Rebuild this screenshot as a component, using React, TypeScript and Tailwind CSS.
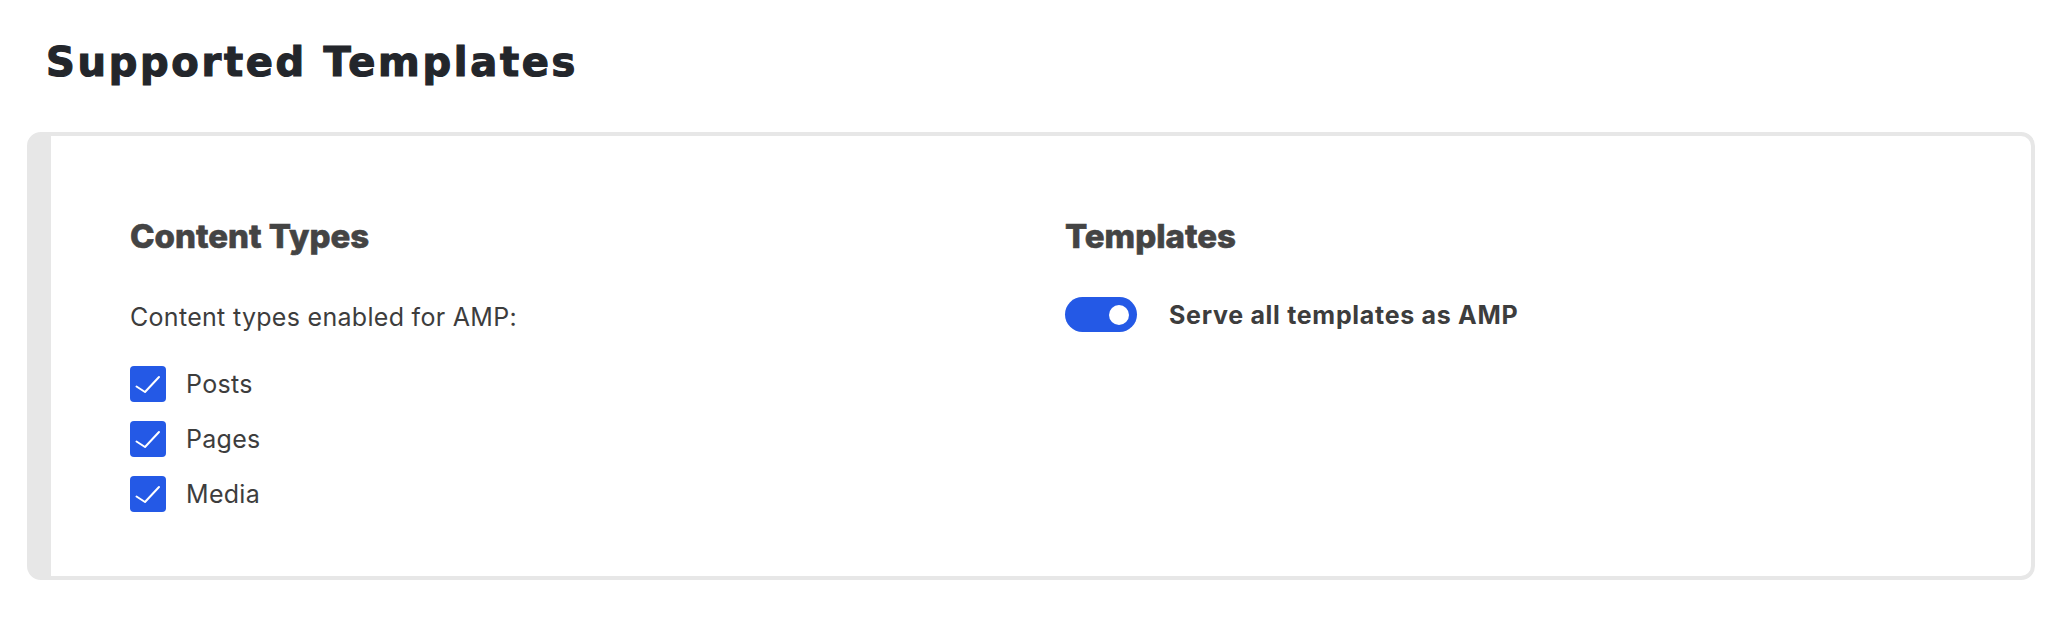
import React from 'react';

const contentTypes = ['Posts', 'Pages', 'Media'];

function CheckBox() {
  return (
    <span className="flex h-[36px] w-[36px] shrink-0 items-center justify-center rounded-[4px] bg-[#2459e6]">
      <svg width="36" height="36" viewBox="0 0 36 36" fill="none">
        <path d="M6.5 20.5L15 26L29 11" stroke="white" strokeWidth="2" strokeLinecap="round" strokeLinejoin="round" />
      </svg>
    </span>
  );
}

export default function App() {
  return (
    <div className="min-h-screen bg-white pl-[27px] pr-[31px] pt-[38px] font-['Inter',sans-serif]">
      <h1 className="ml-[19px] font-['DejaVu_Sans',sans-serif] text-[40px] font-bold leading-[48px] tracking-[2.7px] text-[#23262b] [-webkit-text-stroke:1.2px_#23262b]">
        Supported Templates
      </h1>

      {/* Card */}
      <div className="mt-[46px] h-[448px] rounded-[14px] border-y-4 border-r-4 border-l-[24px] border-[#e7e7e7] bg-white">
        <div className="grid grid-cols-2 gap-[48px] px-[79px] pt-[80px]">
          {/* Content Types */}
          <div>
            <h2 className="text-[33px] font-extrabold leading-[40px] text-[#444] [-webkit-text-stroke:0.6px_#444]">Content Types</h2>
            <p className="mt-[46px] text-[25px] leading-[30px] tracking-[0.3px] text-[#3d3d3d]">Content types enabled for AMP:</p>
            <div className="mt-[34px] flex flex-col gap-[19px]">
              {contentTypes.map((t) => (
                <label key={t} className="flex items-center gap-[20px]">
                  <CheckBox />
                  <span className="text-[25px] leading-[30px] tracking-[0.3px] text-[#3d3d3d]">{t}</span>
                </label>
              ))}
            </div>
          </div>

          {/* Templates */}
          <div>
            <h2 className="text-[33px] font-extrabold leading-[40px] text-[#444] [-webkit-text-stroke:0.6px_#444]">Templates</h2>
            <div className="mt-[41px] flex items-center gap-[32px]">
              <span className="flex h-[35px] w-[72px] items-center justify-end rounded-full bg-[#2459e6] pr-[8px]">
                <span className="h-[20px] w-[20px] rounded-full bg-white" />
              </span>
              <span className="text-[25px] font-bold leading-[30px] tracking-[0.7px] text-[#3d3d3d]">Serve all templates as AMP</span>
            </div>
          </div>
        </div>
      </div>
    </div>
  );
}
